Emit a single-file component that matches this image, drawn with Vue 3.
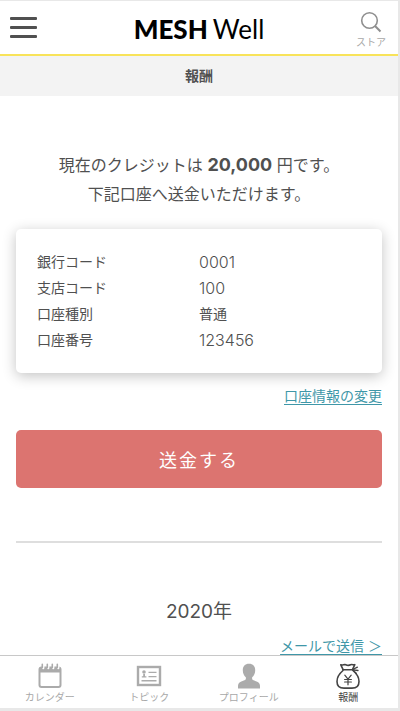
<script setup>
const account = [
  { label: '銀行コード', value: '0001', numeric: true },
  { label: '支店コード', value: '100', numeric: true },
  { label: '口座種別', value: '普通', numeric: false },
  { label: '口座番号', value: '123456', numeric: true },
]
const tabs = [
  { id: 'calendar', label: 'カレンダー' },
  { id: 'topic', label: 'トピック' },
  { id: 'profile', label: 'プロフィール' },
  { id: 'reward', label: '報酬' },
]
const current = 'reward'
</script>

<template>
  <div class="screen">
    <header class="header">
      <button class="menu" type="button" aria-label="メニュー">
        <span class="bar"></span>
        <span class="bar"></span>
        <span class="bar"></span>
      </button>
      <a class="logo" href="#"><span class="logo-bold">MESH</span><span class="logo-light">Well</span></a>
      <a class="store" href="#">
        <svg width="22" height="22" viewBox="0 0 22 22" fill="none" stroke="#8f8f8f" stroke-width="1.6" aria-hidden="true">
          <circle cx="9.5" cy="9.5" r="7.8" />
          <path d="M14.8 14.8 20.5 20.5" stroke-width="2" />
        </svg>
        <span>ストア</span>
      </a>
    </header>

    <h1 class="title">報酬</h1>

    <main class="content">
      <p class="lead">
        現在のクレジットは <strong>20,000</strong> 円です。<br />下記口座へ送金いただけます。
      </p>

      <dl class="card">
        <div v-for="row in account" :key="row.label" class="row">
          <dt>{{ row.label }}</dt>
          <dd :class="{ numeric: row.numeric }">{{ row.value }}</dd>
        </div>
      </dl>

      <a class="link" href="#">口座情報の変更</a>

      <button class="send" type="button">送金する</button>

      <hr class="rule" />

      <h2 class="year">2020年</h2>
      <a class="link" href="#">メールで送信 ＞</a>
    </main>

    <nav class="tabs">
      <a
        v-for="tab in tabs"
        :key="tab.id"
        class="tab"
        :class="{ active: tab.id === current }"
        href="#"
      >
        <svg v-if="tab.id === 'calendar'" width="26" height="26" viewBox="0 0 26 26" aria-hidden="true">
          <path d="M1.500 6.500a3 3 0 0 1 3-3h17a3 3 0 0 1 3 3v15.500a3 3 0 0 1-3 3H4.500a3 3 0 0 1-3-3z" fill="#ababab" />
          <path d="M3.500 9.500h19V22a1 1 0 0 1-1 1h-17a1 1 0 0 1-1-1z" fill="#fff" />
          <g fill="none" stroke-linecap="round">
            <path d="M6.200 2.500v2.500M11.200 2.500v2.500M16.200 2.500v2.500M21.200 2.500v2.500" stroke="#fff" stroke-width="2.400" />
            <path d="M5.300 1.300v3.500M10.300 1.300v3.500M15.300 1.300v3.500M20.300 1.300v3.500" stroke="#ababab" stroke-width="1.600" />
          </g>
        </svg>
        <svg v-else-if="tab.id === 'topic'" width="26" height="26" viewBox="0 0 26 26" aria-hidden="true">
          <rect x="2" y="4" width="22" height="18" fill="none" stroke="#ababab" stroke-width="2.4" />
          <circle cx="8" cy="9" r="1.8" fill="#ababab" />
          <path d="M5.8 14.5v-1.200h1.400v-2.200h1.800v2.200h1.400v1.200z" fill="#ababab" />
          <path d="M12.5 9.4h8M12.5 13.6h8M5.5 17.8h15" stroke="#ababab" stroke-width="1.4" />
        </svg>
        <svg v-else-if="tab.id === 'profile'" width="26" height="26" viewBox="0 0 26 26" aria-hidden="true">
          <path
            d="M13 .8c4 0 6.200 2.700 6.200 6.400 0 3-1.200 5.400-3 7-.3 1.800 0 2.500 1.400 3.100l3.600 1.400c2 .8 2.800 2.400 2.800 4.300v2.400H2V23c0-1.900.8-3.500 2.800-4.300l3.600-1.400c1.400-.6 1.700-1.300 1.400-3.100-1.800-1.600-3-4-3-7C6.800 3.500 9 .8 13 .8z"
            fill="#ababab"
          />
        </svg>
        <svg
          v-else
          width="26"
          height="26"
          viewBox="0 0 26 26"
          fill="none"
          stroke="#444"
          stroke-width="1.6"
          stroke-linejoin="round"
          stroke-linecap="round"
          aria-hidden="true"
        >
          <path d="M8 6.400 5.800 1.800c2 .9 3.300-.8 5 0s3.200.8 4.800 0 2.900.6 4.200-.1L17.600 6.400" />
          <path d="M7.800 6.800h10" stroke-width="1.600" />
          <path d="M17.800 6.500l4.600-2.300M17.800 6.900l5.200.6M17.800 7.200l3.400 3" stroke-width="1.300" />
          <path d="M8 7.500C4.500 10.500 2 14.300 2 18.400c0 4.700 3 6.700 7 6.700h8c4 0 7-2 7-6.700 0-4.100-2.500-7.900-6-10.900" />
          <path d="m9.800 12.200 3.200 4 3.200-4M13 16.200v5.600M9.600 16.500h6.800M9.600 19h6.800" stroke-width="1.200" />
        </svg>
        <span>{{ tab.label }}</span>
      </a>
    </nav>
  </div>
</template>

<style>
body {
  background: #f4f4f4;
}
</style>

<style scoped>
.screen {
  box-sizing: border-box;
  height: 100vh;
  display: flex;
  flex-direction: column;
  overflow: hidden;
  border: solid #e8e8e8;
  border-width: 1px 2px 3px 0;
  background: #fff;
  color: #505050;
  font-family: Inter, "Noto Sans CJK JP", sans-serif;
  font-size: 14px;
}
.header {
  display: grid;
  grid-template-columns: 54px 1fr 54px;
  align-items: center;
  height: 53px;
  flex: none;
  border-bottom: 2px solid #f8e35a;
}
.menu {
  display: flex;
  flex-direction: column;
  gap: 6px;
  width: 48px;
  padding: 0 10px;
  border: 0;
  background: none;
}
.bar {
  width: 27px;
  height: 3px;
  border-radius: 1px;
  background: #505050;
}
.logo {
  display: flex;
  justify-content: center;
  align-items: baseline;
  gap: 5px;
  padding-top: 2px;
  color: #000;
  font-family: Lato, sans-serif;
  font-size: 26px;
  line-height: 32px;
  text-decoration: none;
}
.logo-bold {
  font-weight: 900;
}
.logo-light {
  font-weight: 400;
}
.store {
  display: flex;
  flex-direction: column;
  align-items: center;
  gap: 1px;
  padding-top: 5px;
  color: #a8a8a8;
  font-size: 10px;
  line-height: 16px;
  text-decoration: none;
}
.title {
  flex: none;
  margin: 0;
  background: #f3f3f3;
  font-size: 14px;
  font-weight: 700;
  line-height: 40px;
  text-align: center;
}
.content {
  flex: 1;
  min-height: 0;
  overflow: hidden;
  display: flex;
  flex-direction: column;
  padding: 54px 16px 0;
}
.lead {
  margin: 0 0 20px;
  font-size: 16px;
  line-height: 29px;
  text-align: center;
}
.lead strong {
  font-size: 18px;
  font-weight: 700;
}
.card {
  margin: 0 0 12px;
  padding: 20px 21px;
  border-radius: 5px;
  box-shadow: 0 3px 14px rgba(0, 0, 0, 0.24);
}
.row {
  display: grid;
  grid-template-columns: 1fr 1fr;
  line-height: 26px;
}
.row dd {
  margin: 0;
}
.row .numeric {
  font-size: 16px;
  font-weight: 300;
}
.link {
  align-self: flex-end;
  color: #3f97a8;
  line-height: 22px;
  text-underline-offset: 3px;
}
.send {
  flex: none;
  height: 58px;
  margin: 23px 0 53px;
  border: 0;
  border-radius: 5px;
  background: #dc7470;
  color: #fff;
  font-family: inherit;
  font-size: 18px;
  letter-spacing: 2px;
}
.rule {
  flex: none;
  width: 100%;
  height: 2px;
  margin: 0;
  border: 0;
  background: #dedede;
}
.year {
  margin: 54px 0 8px;
  font-size: 19px;
  font-weight: 400;
  line-height: 30px;
  text-align: center;
}
.tabs {
  flex: none;
  display: grid;
  grid-template-columns: repeat(4, 1fr);
  border-top: 1px solid #c8c8c8;
  background: #fff;
}
.tab {
  display: flex;
  flex-direction: column;
  align-items: center;
  padding: 7px 0 3px;
  color: #a8a8a8;
  font-size: 10px;
  line-height: 16px;
  text-decoration: none;
}
.tab.active {
  color: #444;
}
</style>
